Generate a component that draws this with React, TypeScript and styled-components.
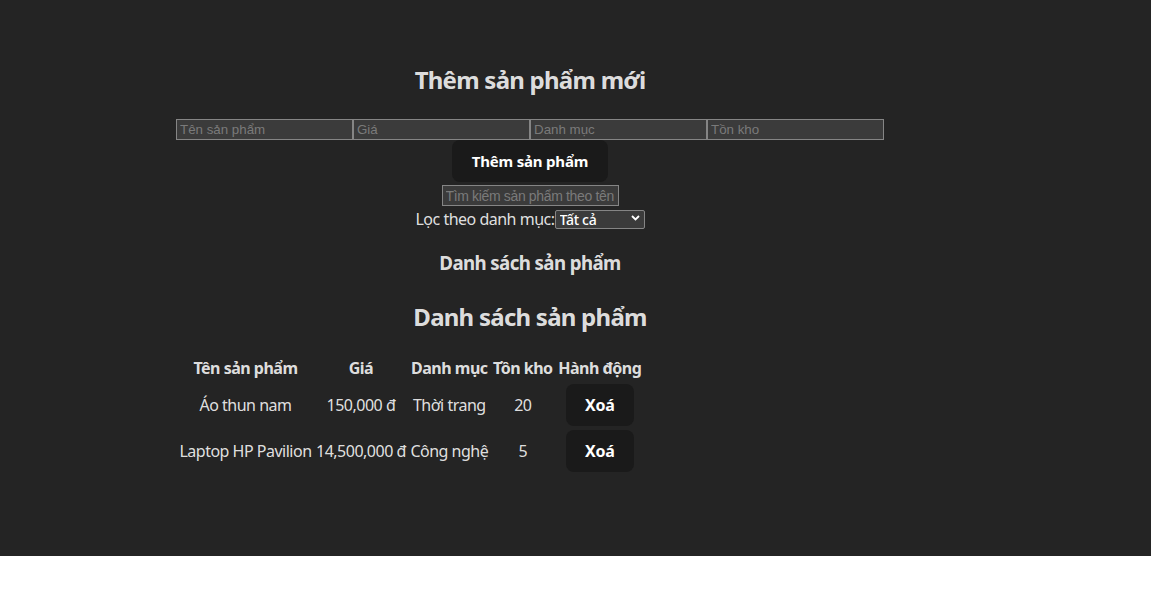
import React from "react";
import styled, { createGlobalStyle } from "styled-components";

const Global = createGlobalStyle`
  html, body { margin: 0; padding: 0; background: #ffffff; }
  body { font-family: "Noto Sans", "Open Sans", sans-serif; }
`;

const Page = styled.div`
  background: #242424;
  height: 556px;
  color: rgba(255, 255, 255, 0.87);
  font-family: "Noto Sans", "Open Sans", sans-serif;
  font-size: 16px;
  line-height: 24px;
`;

const Container = styled.div`
  width: 708px;
  margin-left: 176px;
  padding-top: 64px;
  display: flex;
  flex-direction: column;
  align-items: center;
`;

const Title = styled.h2<{ $top?: number }>`
  margin: ${(p) => p.$top ?? 0}px 0 0;
  font-size: 24px;
  line-height: 32px;
  font-weight: 700;
  letter-spacing: -0.75px;
`;

const SubTitle = styled.h3`
  margin: 22px 0 0;
  font-size: 18.7px;
  line-height: 24px;
  font-weight: 700;
  letter-spacing: -0.6px;
`;

const InputRow = styled.div`
  margin-top: 23px;
  display: flex;
  width: 100%;
`;

const TextInput = styled.input<{ $w?: number }>`
  box-sizing: border-box;
  width: ${(p) => p.$w ?? 177}px;
  height: 21px;
  margin: 0;
  padding: 1px 3px;
  background: #3b3b3b;
  border: 1px solid #858585;
  color: #e6e6e6;
  font-family: "Liberation Sans", Arial, sans-serif;
  font-size: 13.33px;
  outline: none;
  &::placeholder { color: #7a7a7a; }
`;

const Button = styled.button<{ $px?: number; $fs?: number }>`
  box-sizing: border-box;
  height: 42px;
  padding: 0 ${(p) => p.$px ?? 19}px;
  border-radius: 8px;
  border: 1px solid transparent;
  background: #1a1a1a;
  color: #ffffff;
  font-family: "Noto Sans", "Open Sans", sans-serif;
  font-size: ${(p) => p.$fs ?? 15}px;
  font-weight: 700;
  letter-spacing: -0.2px;
  cursor: pointer;
`;

const SearchInput = styled(TextInput)`
  margin-top: 3px;
  font-size: 14px;
  letter-spacing: -0.35px;
`;

const FilterRow = styled.div`
  margin-top: 3px;
  height: 20px;
  display: flex;
  align-items: center;
  font-size: 16px;
  line-height: 20px;
  letter-spacing: -0.5px;
`;

const SelectWrap = styled.div`
  position: relative;
  width: 90px;
  height: 19px;
  margin-top: -1px;
`;

const Select = styled.select`
  box-sizing: border-box;
  appearance: none;
  width: 90px;
  height: 19px;
  padding: 0 0 0 4px;
  margin: 0;
  background: #3b3b3b;
  border: 1px solid #858585;
  border-radius: 2px;
  color: #ffffff;
  font-family: "Noto Sans", "Open Sans", sans-serif;
  font-size: 14px;
  line-height: 17px;
  font-weight: 500;
  letter-spacing: -0.3px;
  outline: none;
`;

const Chevron = styled.svg`
  position: absolute;
  right: 5px;
  top: 6px;
  pointer-events: none;
`;

const Table = styled.table`
  align-self: flex-start;
  margin-top: 20px;
  border-spacing: 2px;
  font-size: 16px;
  line-height: 24px;
  letter-spacing: -0.5px;
`;

const Th = styled.th<{ $w: number }>`
  width: ${(p) => p.$w}px;
  padding: 1px;
  font-weight: 700;
  white-space: nowrap;
  text-align: center;
`;

const Td = styled.td`
  padding: 1px;
  text-align: center;
  white-space: nowrap;
`;

const products = [
  { name: "Áo thun nam", price: "150,000 đ", cat: "Thời trang", stock: 20 },
  { name: "Laptop HP Pavilion", price: "14,500,000 đ", cat: "Công nghệ", stock: 5 },
];

export default function App() {
  return (
    <>
      <Global />
      <Page>
        <Container>
          <Title>Thêm sản phẩm mới</Title>
          <InputRow>
            <TextInput placeholder="Tên sản phẩm" />
            <TextInput placeholder="Giá" />
            <TextInput placeholder="Danh mục" />
            <TextInput placeholder="Tồn kho" />
          </InputRow>
          <Button>Thêm sản phẩm</Button>
          <SearchInput placeholder="Tìm kiếm sản phẩm theo tên" />
          <FilterRow>
            <span>Lọc theo danh mục:</span>
            <SelectWrap>
              <Select defaultValue="all">
                <option value="all">Tất cả</option>
                <option value="tt">Thời trang</option>
                <option value="cn">Công nghệ</option>
              </Select>
              <Chevron width="9" height="6" viewBox="0 0 9 6">
                <path d="M1 1 L4.5 4.5 L8 1" stroke="#ffffff" strokeWidth="1.8" fill="none" />
              </Chevron>
            </SelectWrap>
          </FilterRow>
          <SubTitle>Danh sách sản phẩm</SubTitle>
          <Title $top={26}>Danh sách sản phẩm</Title>
          <Table>
            <thead>
              <tr>
                <Th $w={133}>Tên sản phẩm</Th>
                <Th $w={89}>Giá</Th>
                <Th $w={79}>Danh mục</Th>
                <Th $w={60}>Tồn kho</Th>
                <Th $w={86}>Hành động</Th>
              </tr>
            </thead>
            <tbody>
              {products.map((p) => (
                <tr key={p.name}>
                  <Td>{p.name}</Td>
                  <Td>{p.price}</Td>
                  <Td>{p.cat}</Td>
                  <Td>{p.stock}</Td>
                  <Td>
                    <Button $px={18} $fs={16}>Xoá</Button>
                  </Td>
                </tr>
              ))}
            </tbody>
          </Table>
        </Container>
      </Page>
    </>
  );
}
